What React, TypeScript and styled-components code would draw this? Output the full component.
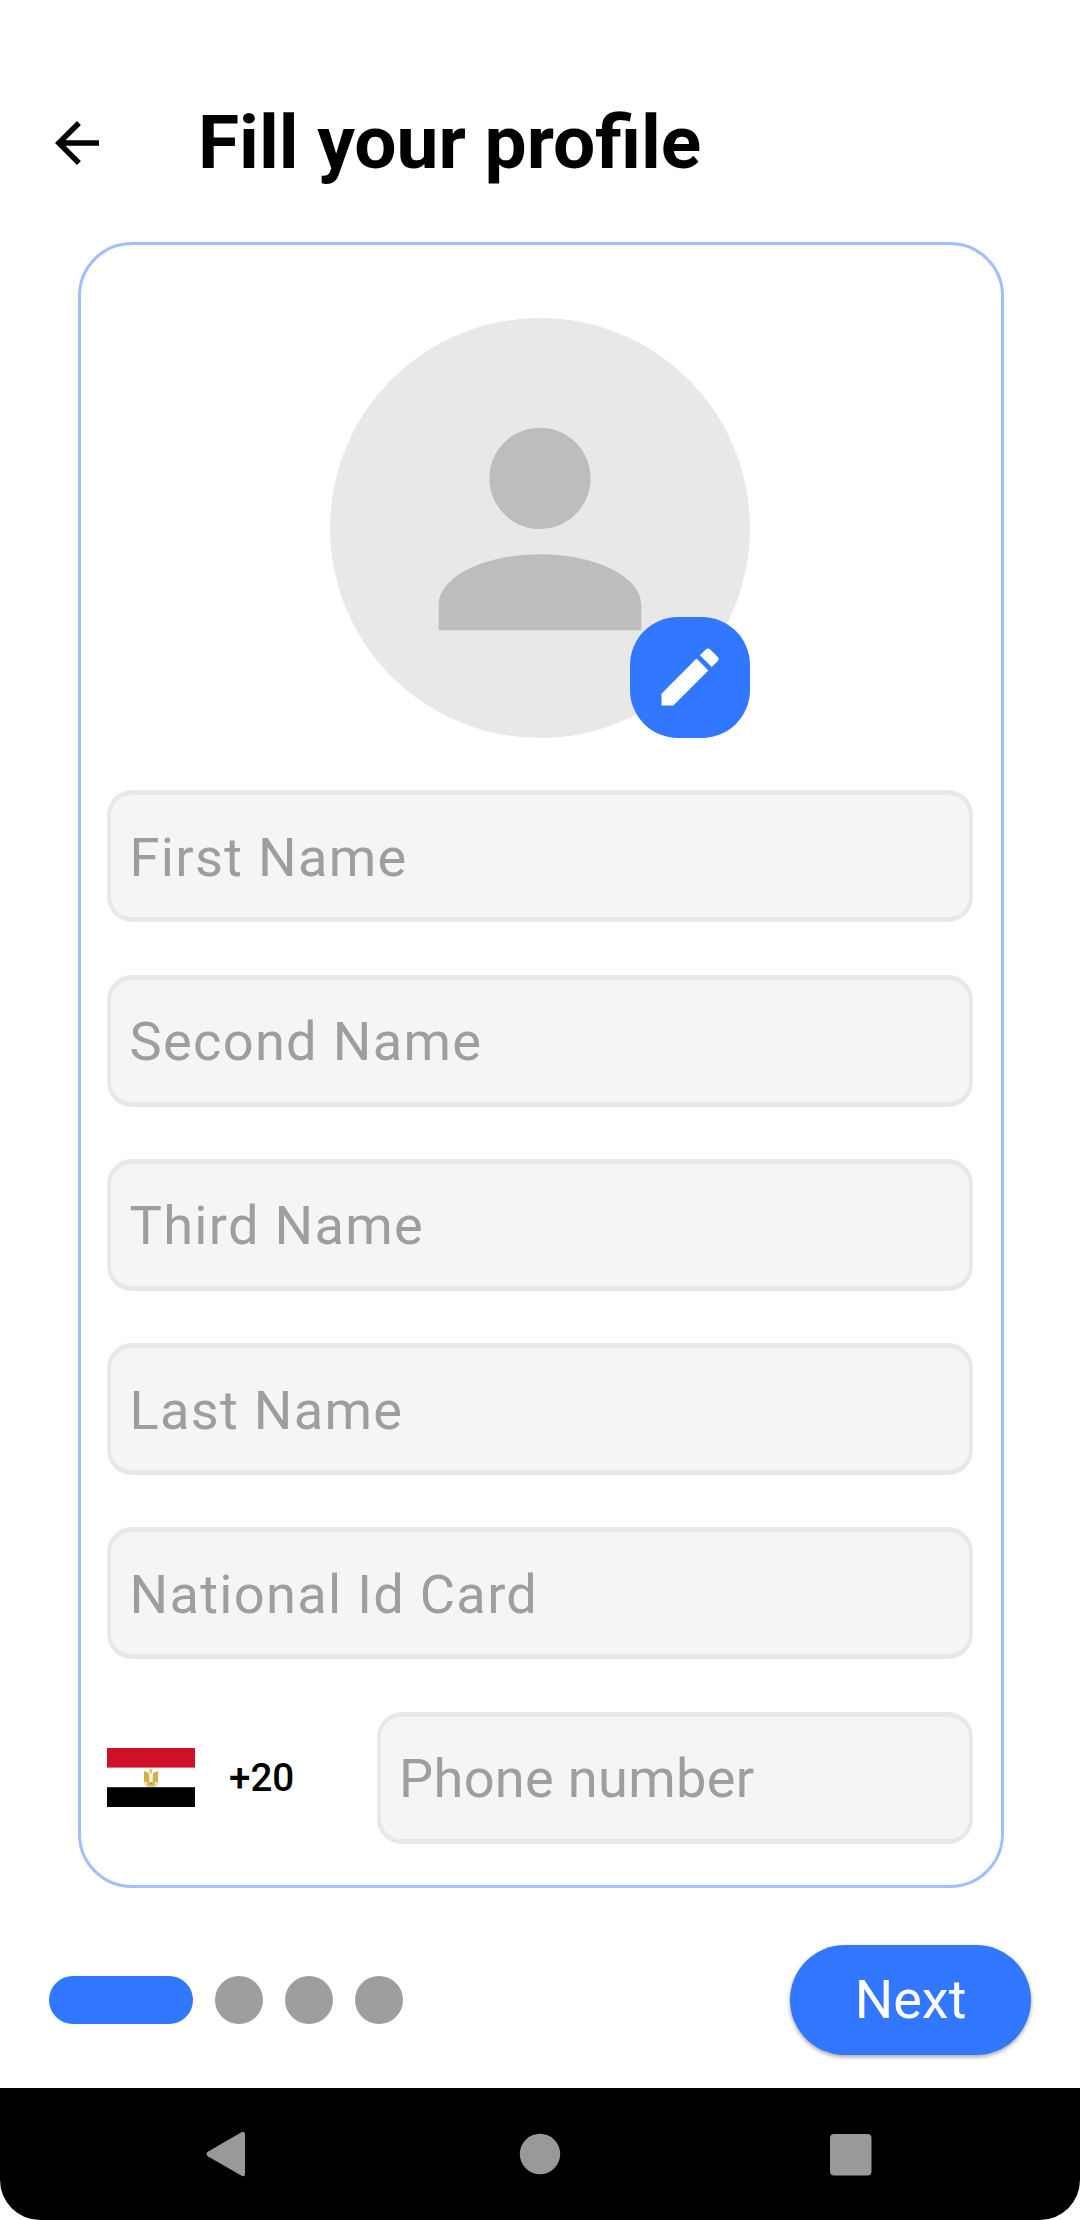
import React from "react";
import styled, { createGlobalStyle } from "styled-components";

const BLUE = "#3277ff";

const GlobalStyle = createGlobalStyle`
  html, body { margin: 0; padding: 0; background: #fff; }
  *, *::before, *::after { box-sizing: border-box; }
`;

const Screen = styled.div`
  width: 1080px;
  height: 2220px;
  display: flex;
  flex-direction: column;
  background: #fff;
  font-family: Roboto, "Liberation Sans", sans-serif;
  overflow: hidden;
`;

const Header = styled.header`
  height: 242px;
  padding: 86px 0 42px 44px;
  display: flex;
  align-items: center;
`;

const BackButton = styled.button`
  width: 66px;
  height: 66px;
  padding: 0;
  border: 0;
  background: none;
  svg { display: block; }
`;

const Title = styled.h1`
  margin: 0 0 0 88px;
  font-size: 74.9px;
  line-height: 88px;
  font-weight: 700;
  color: #000;
  white-space: nowrap;
`;

const Card = styled.main`
  width: 925.5px;
  height: 1645.5px;
  margin-left: 78px;
  flex: none;
  padding: 73.3px 27.5px 0 26px;
  border: 3px solid #9fc0ff;
  border-radius: 54px;
  display: flex;
  flex-direction: column;
`;

const Avatar = styled.div`
  position: relative;
  width: 420px;
  height: 420px;
  margin: 0 auto 52px;
  flex: none;
  display: flex;
  align-items: center;
  justify-content: center;
  border-radius: 50%;
  background: #e8e8e8;
`;

const PersonIcon = styled.svg`
  display: block;
  width: 304px;
  height: 304px;
  margin-top: 1px;
  fill: #bdbdbd;
`;

const EditBadge = styled.button`
  position: absolute;
  right: 0;
  bottom: 0;
  width: 120px;
  height: 121px;
  padding: 0;
  border: 0;
  border-radius: 48px;
  background: ${BLUE};
  display: flex;
  align-items: center;
  justify-content: center;
  svg { margin: 0 1px 1px 0; }
`;

const Fields = styled.div`
  display: flex;
  flex-direction: column;
  gap: 52.3px;
`;

const Field = styled.div<{ $spacing?: number }>`
  height: 132px;
  flex: 1 0 auto;
  display: flex;
  align-items: center;
  padding: 3px 0 0 18.5px;
  border: solid #e8e8e8;
  border-width: 5px 4px;
  border-radius: 25px;
  background: #f5f5f5;
  color: #9e9e9e;
  font-size: 54.2px;
  line-height: 62px;
  letter-spacing: ${(p) => p.$spacing ?? 0}px;
  white-space: nowrap;
`;

const PhoneRow = styled.div`
  display: flex;
  align-items: center;
`;

const Flag = styled.svg`
  display: block;
  width: 88px;
  height: 59px;
  flex: none;
`;

const DialCode = styled.span`
  width: 147.5px;
  margin-left: 34px;
  padding-top: 1px;
  flex: none;
  font-size: 38.6px;
  font-weight: 500;
  line-height: 44px;
  color: #000;
`;

const Footer = styled.footer`
  flex: 1;
  padding: 24px 49px 0 49.3px;
  display: flex;
  align-items: center;
  justify-content: space-between;
`;

const Steps = styled.div`
  display: flex;
  gap: 22px;
`;

const Step = styled.span<{ $active?: boolean }>`
  width: ${(p) => (p.$active ? 144 : 48)}px;
  height: 48px;
  border-radius: 24px;
  background: ${(p) => (p.$active ? BLUE : "#9e9e9e")};
`;

const NextButton = styled.button`
  width: 241px;
  height: 110px;
  padding: 0;
  border: 0;
  border-radius: 55px;
  background: ${BLUE};
  color: #fff;
  font-family: inherit;
  font-size: 54px;
  line-height: 62px;
  box-shadow: 0 2px 4px rgba(0, 0, 0, 0.36);
`;

const NavBar = styled.nav`
  height: 132px;
  flex: none;
  display: flex;
  justify-content: space-between;
  align-items: center;
  padding: 0 203px;
  border-radius: 0 0 40px 40px;
  background: #000;
`;

const NavIcon = styled.svg`
  display: block;
  width: 52px;
  height: 52px;
  fill: #999;
`;

const names = ["First Name", "Second Name", "Third Name", "Last Name", "National Id Card"];

export default function App() {
  return (
    <Screen>
      <GlobalStyle />
      <Header>
        <BackButton aria-label="Back">
          <svg width="66" height="66" viewBox="0 0 24 24">
            <path d="M20 11H7.83l5.59-5.59L12 4l-8 8 8 8 1.41-1.41L7.83 13H20v-2z" />
          </svg>
        </BackButton>
        <Title>Fill your profile</Title>
      </Header>
      <Card>
        <Avatar>
          <PersonIcon viewBox="0 0 24 24">
            <path d="M12 12c2.21 0 4-1.79 4-4s-1.79-4-4-4-4 1.79-4 4 1.79 4 4 4zm0 2c-4.42 0-8 1.79-8 4v2h16v-2c0-2.21-3.58-4-8-4z" />
          </PersonIcon>
          <EditBadge aria-label="Edit photo">
            <svg width="76" height="76" viewBox="0 0 24 24" fill="#fff">
              <path d="M3 17.25V21h3.75L17.81 9.94l-3.75-3.75L3 17.25zM20.71 7.04c.39-.39.39-1.02 0-1.41l-2.34-2.34c-.39-.39-1.02-.39-1.41 0l-1.83 1.83 3.75 3.75 1.83-1.83z" />
            </svg>
          </EditBadge>
        </Avatar>
        <Fields>
          {names.map((name) => (
            <Field key={name} $spacing={1.3}>{name}</Field>
          ))}
          <PhoneRow>
            <Flag viewBox="0 0 88 59">
              <rect width="88" height="59" fill="#fff" />
              <rect width="88" height="19.6" fill="#ce1126" />
              <rect y="39.2" width="88" height="19.8" fill="#000" />
              <path d="M37 23L42 25 42.600 29.500V33L40 36.500 39.500 33.500 37 35z" fill="#d3b04a" />
              <path d="M51 23L46 25 45.400 29.500V33L48 36.500 48.500 33.500 51 35z" fill="#d3b04a" />
              <path d="M42.300 21h3.200l-.5 4.500h-2.200z" fill="#dfbf7c" />
              <path d="M42.600 26h2.800v7l-1.400 1.500-1.400-1.500z" fill="#fffaf0" />
              <path d="M37.500 33.500L40.500 35.500 38.500 38.500 37.200 37zM50.500 33.500L47.500 35.500 49.500 38.500 50.800 37z" fill="#efe0b0" />
              <path d="M39 36h10l-1 2.800h-8z" fill="#e0c26c" />
              <path d="M41.500 34h5v2.500h-5z" fill="#c79f37" />
            </Flag>
            <DialCode>+20</DialCode>
            <Field $spacing={0.3}>Phone number</Field>
          </PhoneRow>
        </Fields>
      </Card>
      <Footer>
        <Steps>
          <Step $active />
          <Step />
          <Step />
          <Step />
        </Steps>
        <NextButton>Next</NextButton>
      </Footer>
      <NavBar>
        <NavIcon viewBox="0 0 52 52">
          <path d="M4.800 23.800L38.500 4.200Q42 2.600 42 6.500V45.500Q42 49.400 38.500 47.800L4.800 28.200Q2.200 26 4.800 23.800z" />
        </NavIcon>
        <NavIcon viewBox="0 0 52 52">
          <circle cx="26" cy="26" r="20.200" />
        </NavIcon>
        <NavIcon viewBox="0 0 52 52">
          <rect x="5" y="6" width="41.500" height="41.500" rx="4" />
        </NavIcon>
      </NavBar>
    </Screen>
  );
}
